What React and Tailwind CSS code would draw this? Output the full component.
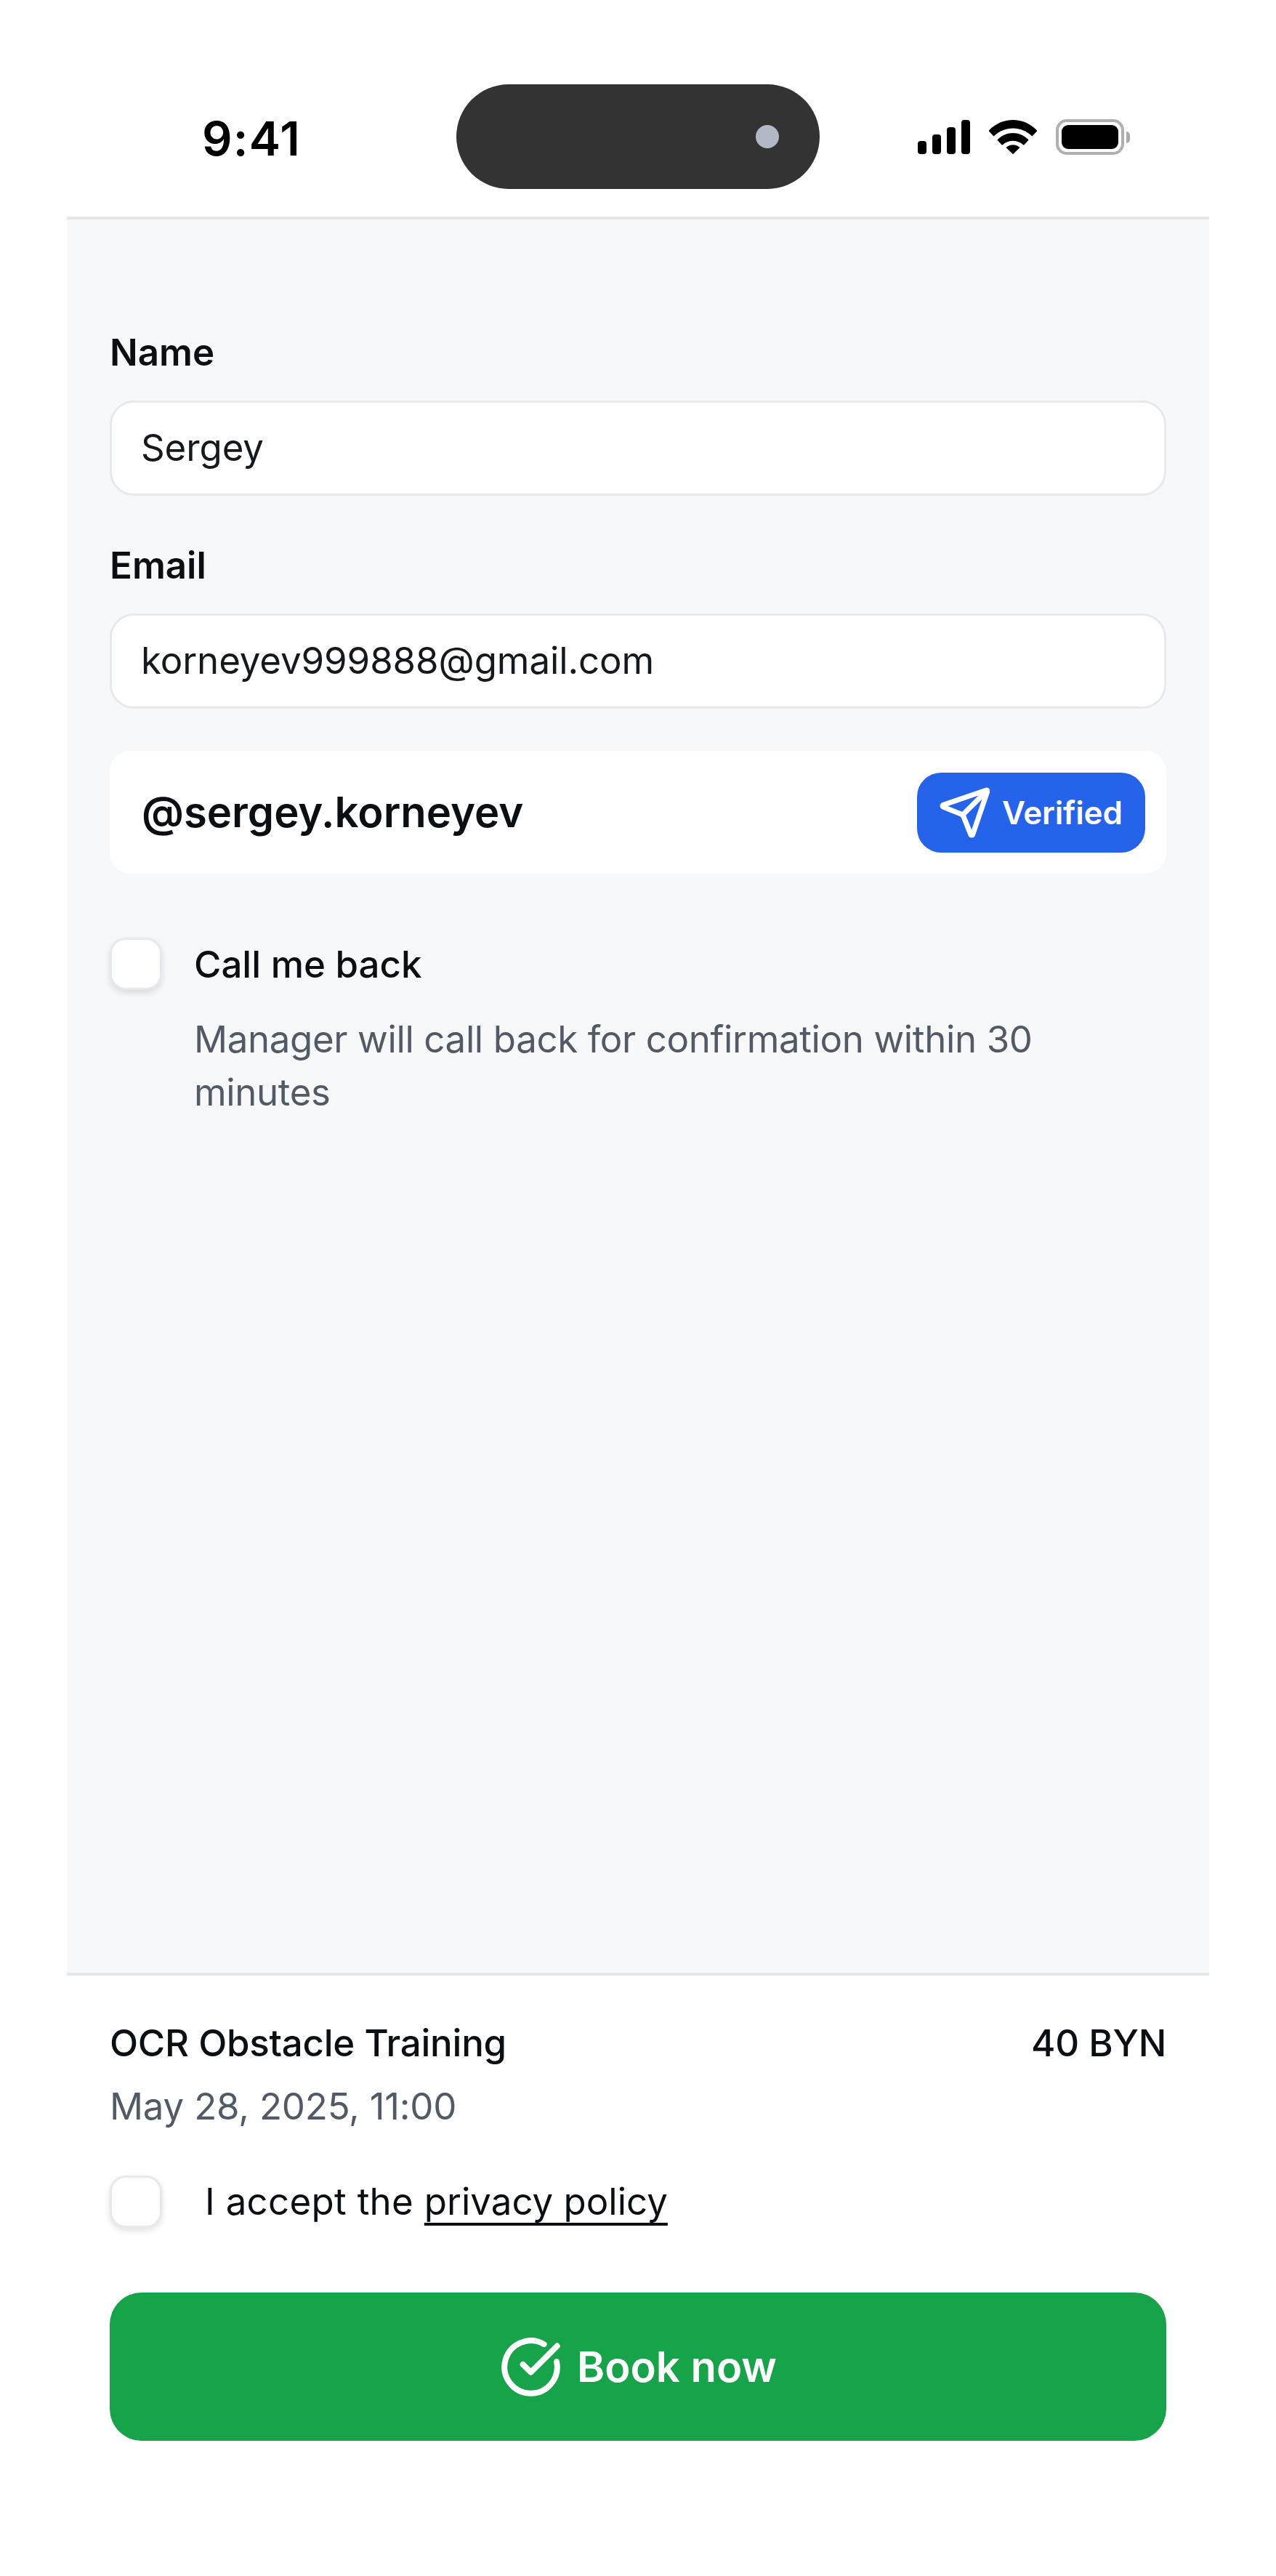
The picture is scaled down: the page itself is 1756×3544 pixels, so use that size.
import React from "react";
import { Send, CircleCheckBig } from "lucide-react";

function Wifi() {
  return (
    <svg width="66" height="47" viewBox="0 0 66 47" fill="#000">
      <path d="M0 14.5 C18 -4.8 48 -4.8 66 14.5 Q66.4 15 66 15.5 L60 22 Q59.4 22.5 58.8 22 C44.5 8 21.5 8 7.2 22 Q6.6 22.5 6 22 L0 15.5 Q-0.4 15 0 14.5 Z" />
      <path d="M11.8 27 C24 15 42 15 54.2 27 Q54.6 27.5 54.2 28 L48.4 34.2 Q47.8 34.6 47.2 34.2 C39 26.8 27 26.8 18.8 34.2 Q18.2 34.6 17.6 34.2 L11.8 28 Q11.4 27.5 11.8 27 Z" />
      <path d="M24 37.5 C29 33 37 33 42 37.5 Q42.4 38 42 38.6 L33.7 46.6 Q33 47.2 32.3 46.6 L24 38.6 Q23.6 38 24 37.5 Z" />
    </svg>
  );
}

function Field({ label, value }) {
  return (
    <div className="flex flex-col">
      <div className="text-[51px] leading-[73px] font-semibold text-[#0b0f14]">{label}</div>
      <div className="mt-[30px] flex h-[131px] items-center rounded-[33px] border-[3px] border-[#e7e9ed] bg-white pl-[40px] text-[51px] tracking-[-0.1px] text-[#15181c]">
        {value}
      </div>
    </div>
  );
}

function Box() {
  return (
    <div className="h-[72px] w-[72px] shrink-0 rounded-[22px] border-[3px] border-[#e7e9ed] bg-white shadow-[0_4px_8px_rgba(0,0,0,0.12)]" />
  );
}

export default function App() {
  return (
    <div className="min-h-[3544px] bg-white font-['Inter',sans-serif]">
      <div className="ml-[92px] flex h-[3544px] w-[1572px] flex-col">
        <header className="relative flex h-[302px] shrink-0 items-start border-b-[4px] border-[#e5e7eb] bg-white">
          <div className="absolute left-[186px] top-[154px] text-[65px] font-semibold leading-[74px] tracking-[1.2px] text-black">
            9:41
          </div>
          <div className="absolute left-[536px] top-[116px] flex h-[144px] w-[500px] items-center justify-end rounded-full bg-[#333333] pr-[56px]">
            <div className="h-[32px] w-[32px] rounded-full bg-[#b4b8c6]" />
          </div>
          <div className="absolute left-[1171px] top-[165px] flex items-start gap-[26px]">
            <div className="flex h-[47px] items-end gap-[8px]">
              <div className="h-[18px] w-[12px] rounded-[4px] bg-black" />
              <div className="h-[27px] w-[12px] rounded-[4px] bg-black" />
              <div className="h-[37px] w-[12px] rounded-[4px] bg-black" />
              <div className="h-[47px] w-[12px] rounded-[4px] bg-black" />
            </div>
            <Wifi />
            <div className="-mt-[1px] flex items-center gap-[3px]">
              <div className="h-[49px] w-[94px] rounded-[15px] border-[4px] border-[#b0b0b0] p-[4px]">
                <div className="h-full w-full rounded-[9px] bg-black" />
              </div>
              <div className="h-[16px] w-[5px] rounded-r-full bg-[#aaaaaa]" />
            </div>
          </div>
        </header>

        <main className="flex min-h-0 flex-1 flex-col bg-[#f7f8fa] px-[59px] pt-[146px]">
          <div className="flex flex-col gap-[59px]">
            <Field label="Name" value="Sergey" />
            <Field label="Email" value="korneyev999888@gmail.com" />
            <div className="-mt-[1px] flex h-[169px] items-center justify-between rounded-[29px] bg-white pl-[44px] pr-[29px]">
              <span className="text-[58px] font-semibold text-[#0b0f14]">@sergey.korneyev</span>
              <div className="flex h-[110px] w-[314px] items-center gap-[14px] rounded-[33px] bg-[#2563eb] pl-[29px] text-[44px] font-semibold text-white">
                <Send size={74} strokeWidth={2.3} className="shrink-0" />
                <span className="tracking-[-0.2px]">Verified</span>
              </div>
            </div>
          </div>

          <div className="mt-[88px] flex gap-[44px]">
            <Box />
            <div className="flex flex-col">
              <div className="text-[51px] font-medium leading-[73px] text-[#0b0f14]">Call me back</div>
              <div className="mt-[30px] w-[1300px] text-[51px] leading-[73px] tracking-[-0.37px] text-[#525a66]">
                Manager will call back for confirmation within 30 minutes
              </div>
            </div>
          </div>
        </main>

        <footer className="flex h-[830px] shrink-0 flex-col border-t-[4px] border-[#e5e7eb] bg-white px-[59px] pt-[56px]">
          <div className="flex items-center justify-between text-[51px] font-medium leading-[73px] tracking-[-0.25px] text-[#0b0f14]">
            <span>OCR Obstacle Training</span>
            <span>40 BYN</span>
          </div>
          <div className="mt-[14px] text-[51px] leading-[73px] tracking-[-0.2px] text-[#525a66]">May 28, 2025, 11:00</div>
          <div className="mt-[58px] flex items-center gap-[59px]">
            <Box />
            <div className="text-[51px] leading-[73px] text-[#0b0f14]">
              <span className="tracking-[0.3px]">I accept the </span>
              <span className="underline decoration-[4px] underline-offset-[11px]">privacy policy</span>
            </div>
          </div>
          <button className="mt-[89px] flex h-[204px] w-full items-center justify-center gap-[20px] rounded-[44px] bg-[#16a34a] text-[58px] font-semibold text-white">
            <CircleCheckBig size={87} strokeWidth={2.2} />
            <span>Book now</span>
          </button>
        </footer>
      </div>
    </div>
  );
}
